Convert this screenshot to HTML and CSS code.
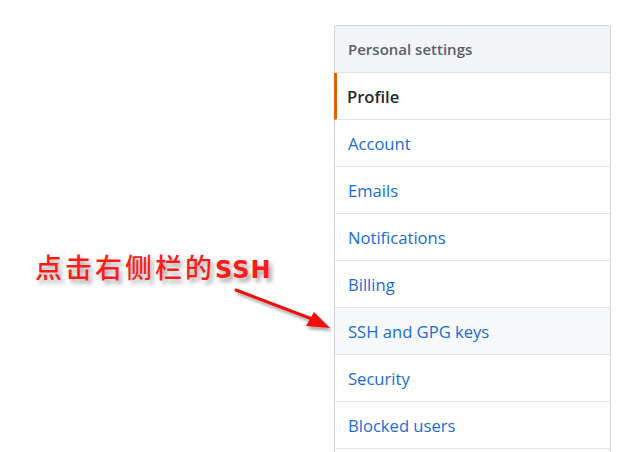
FILE: index.html
```html
<!DOCTYPE html>
<html lang="zh">
<head>
<meta charset="utf-8">
<link rel="stylesheet" href="styles.css">
</head>
<body>
<div class="page">
  <div class="note">
    <div class="note-text">点击右侧栏的<span class="latin">SSH</span></div>
  </div>
  <nav class="menu">
    <div class="menu-header">Personal settings</div>
    <a class="menu-item selected">Profile</a>
    <a class="menu-item">Account</a>
    <a class="menu-item">Emails</a>
    <a class="menu-item">Notifications</a>
    <a class="menu-item">Billing</a>
    <a class="menu-item hover">SSH and GPG keys</a>
    <a class="menu-item">Security</a>
    <a class="menu-item">Blocked users</a>
    <a class="menu-item"></a>
  </nav>
  <svg class="arrow" width="120" height="60" viewBox="0 0 120 60">
    <defs>
      <filter id="sh" x="-20%" y="-40%" width="140%" height="180%">
        <feDropShadow dx="2" dy="3" stdDeviation="1.5" flood-color="#000" flood-opacity="0.35"/>
      </filter>
    </defs>
    <g filter="url(#sh)">
      <line x1="6" y1="8" x2="90" y2="40" stroke="#f01010" stroke-width="3" stroke-linecap="round"/>
      <polygon points="100,46 76,44 84,30" fill="#f01010"/>
    </g>
  </svg>
</div>
</body>
</html>
```
FILE: styles.css
```css
html, body {
  margin: 0;
  padding: 0;
  background: #ffffff;
}
.page {
  position: relative;
  width: 638px;
  height: 452px;
  overflow: hidden;
  display: flex;
  align-items: flex-start;
}
.note {
  width: 334px;
  flex: none;
  padding-top: 252px;
  padding-left: 35px;
  box-sizing: border-box;
}
.note-text {
  font-family: "Noto Sans CJK SC", "Noto Sans", sans-serif;
  font-size: 27px;
  line-height: 30px;
  font-weight: 500;
  letter-spacing: 3px;
  color: #ff1a1a;
  text-shadow: 3px 4px 4px rgba(0, 0, 0, 0.35);
  white-space: nowrap;
}
.note-text .latin {
  font-family: "DejaVu Sans", sans-serif;
  font-weight: 700;
  letter-spacing: 1px;
  font-size: 24px;
}
.menu {
  margin-top: 25px;
  width: 277px;
  box-sizing: border-box;
  border: 1px solid #d1d5da;
  border-bottom: none;
  border-radius: 3px 3px 0 0;
  font-family: "Open Sans", "Noto Sans", sans-serif;
}
.menu-header {
  height: 46px;
  display: flex;
  align-items: center;
  padding-left: 13px;
  background: #f3f4f7;
  color: #586069;
  font-size: 15px;
  font-weight: 600;
  border-bottom: 1px solid #e1e4e8;
  border-radius: 3px 3px 0 0;
}
.menu-item {
  display: flex;
  align-items: center;
  height: 46px;
  padding-left: 13px;
  border-bottom: 1px solid #e1e4e8;
  color: #1a6bdc;
  font-size: 16.6px;
  text-decoration: none;
  background: #ffffff;
}
.menu-item.selected {
  color: #24292e;
  font-weight: 600;
  border-left: 3px solid #e36209;
  padding-left: 10px;
  margin-left: -1px;
}
.menu-item.hover {
  background: #f6f8fa;
}
.arrow {
  position: absolute;
  left: 230px;
  top: 282px;
}
```
